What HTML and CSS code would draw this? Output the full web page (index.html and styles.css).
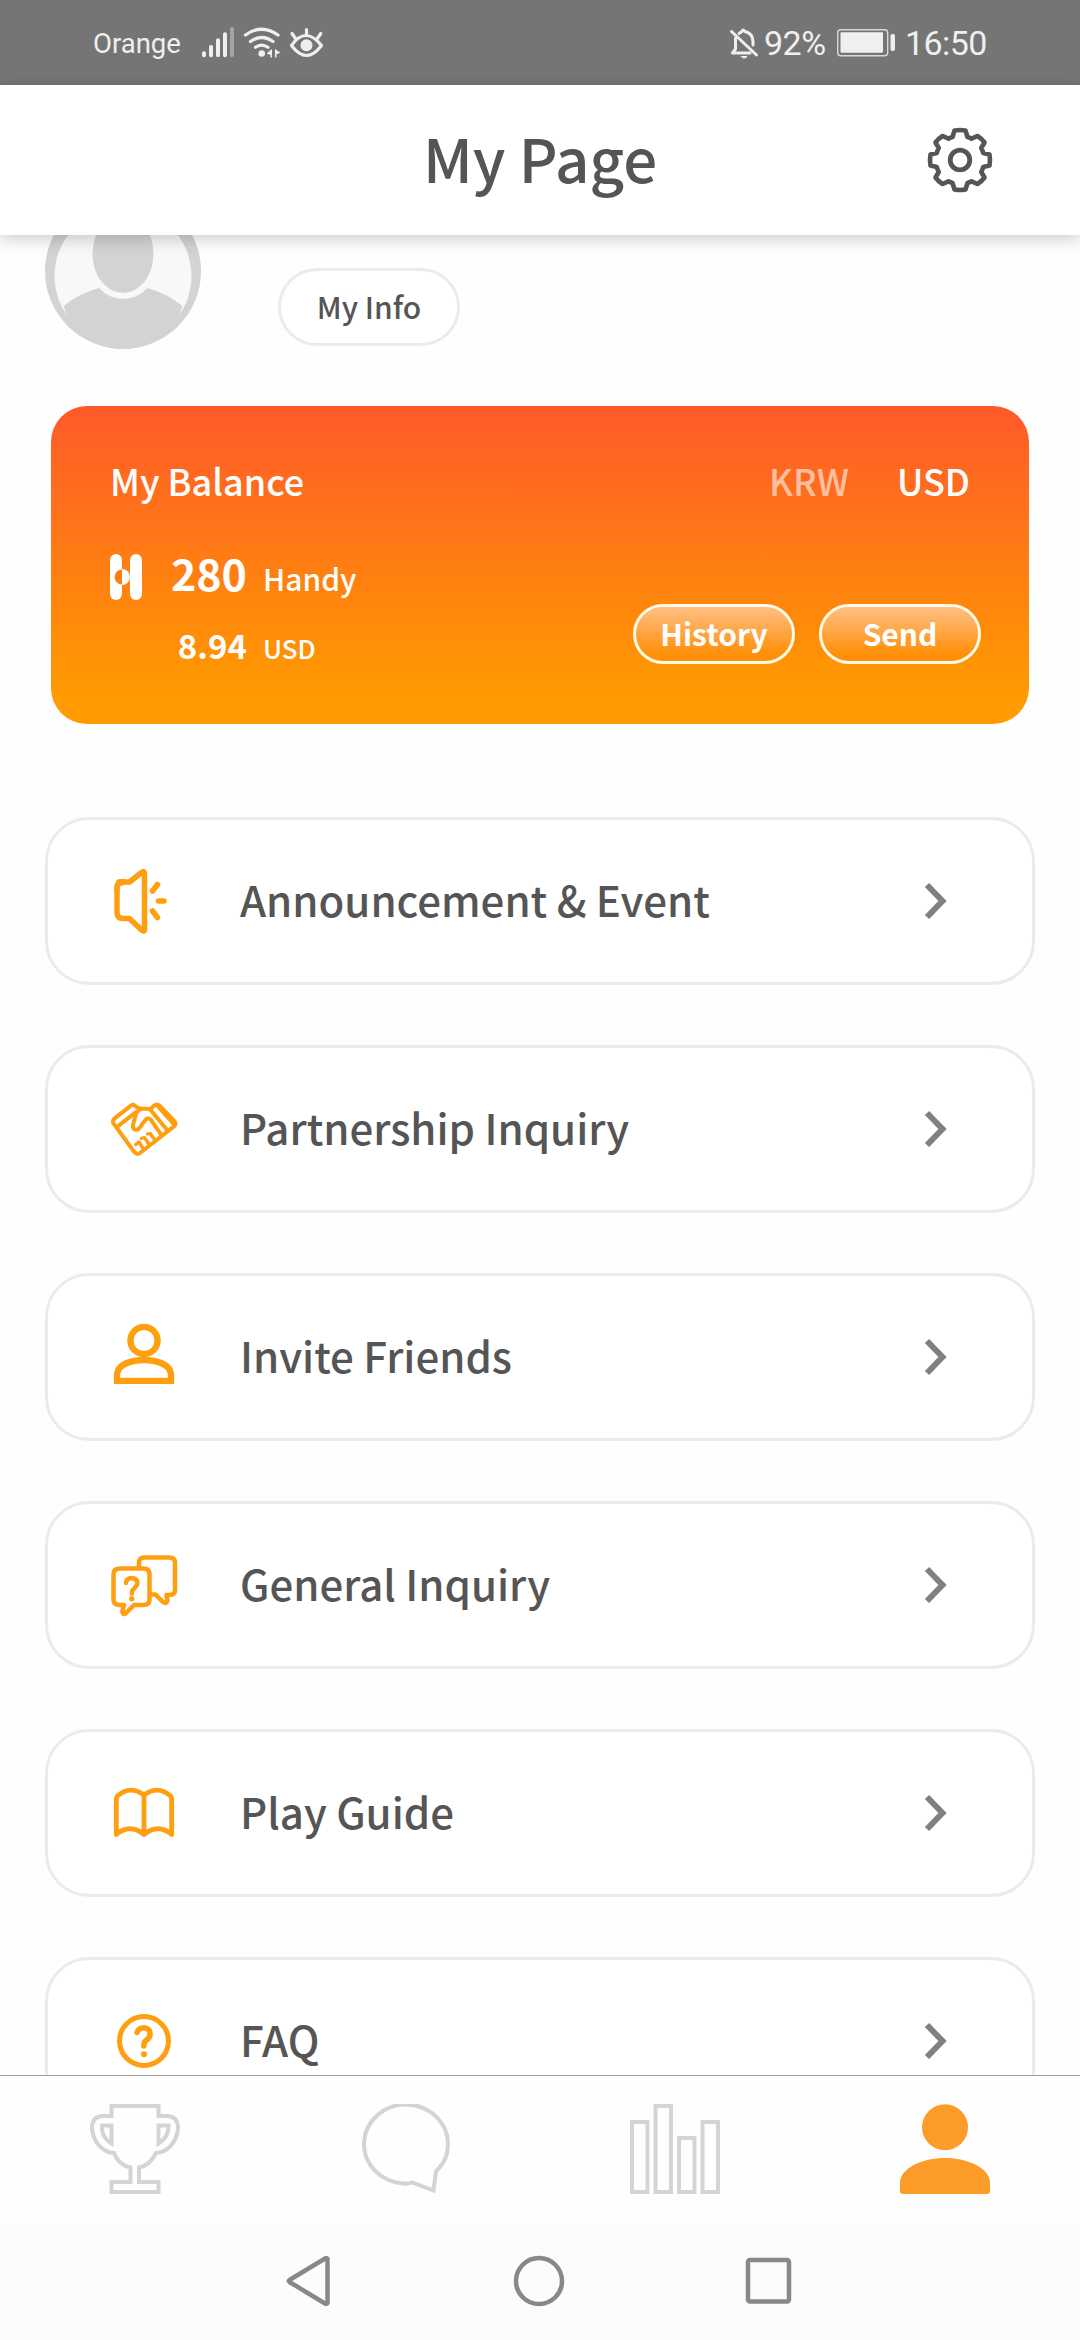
FILE: index.html
```html
<!DOCTYPE html>
<html lang="en">
<head>
<meta charset="utf-8">
<title>My Page</title>
<link rel="stylesheet" href="styles.css">
</head>
<body>
<div class="screen">
  <div class="status">
    <span class="carrier">Orange</span>
    <svg class="status-left" viewBox="200 24 126 38" width="126" height="38">
      <g stroke="#efefef" stroke-width="4" stroke-linecap="round">
        <path d="M204 53.2V55.3M211 47V55.3M218 40.3V55.3M225 34.3V55.3"/>
        <path stroke="#a3a3a3" d="M232 29V55.3"/>
      </g>
      <g fill="none" stroke="#efefef" stroke-width="3.2" stroke-linecap="round">
        <path d="M245.5 35q16-11.500 32.500 0"/>
        <path d="M250.500 41.500q11-8 22.500 0"/>
        <path d="M255.500 47.300q6-4.500 12.500 0"/>
      </g>
      <circle cx="261.700" cy="53.500" r="3.300" fill="#efefef"/>
      <path d="M272 49v8.500h-1.500V55l-4-1.500zM275 49l5.500 3.800-4 1.500v3.200H275z" fill="#efefef"/>
      <g fill="none" stroke="#efefef" stroke-width="3.200" stroke-linecap="round">
        <path d="M291.500 45.500q14-20 30 0-15 20-30 0z" stroke-linejoin="round"/>
        <path d="M306.500 29.500v5.500M292 33.500l3.500 5M320.800 33.500l-3.500 5"/>
      </g>
      <circle cx="306.500" cy="45.300" r="6" fill="#efefef"/>
    </svg>
    <svg class="bell" viewBox="728 25 32 35" width="32" height="35">
      <g fill="none" stroke="#efefef" stroke-width="3" stroke-linecap="round" stroke-linejoin="round">
        <path d="M731.500 30.500L756.500 54"/>
        <path d="M735.500 37V48L732.500 52H750"/>
        <path d="M739 32.500q2-1.500 3-2 .5-3 3 0 8 2 8 10V44"/>
      </g>
      <path d="M740.500 55h7q-3 5-7 0z" fill="#efefef"/>
    </svg>
    <span class="percent">92%</span>
    <svg class="battery" viewBox="836 28 60 30" width="60" height="30">
      <rect x="837.700" y="29.700" width="50" height="26" rx="3" fill="none" stroke="#d8d8d8" stroke-width="1.400"/>
      <rect x="840.500" y="32.300" width="42.500" height="20.500" rx="1" fill="#efefef"/>
      <rect x="890.500" y="34" width="4.500" height="17" rx="2" fill="#efefef"/>
    </svg>
    <span class="clock">16:50</span>
  </div>

  <header class="header">
    <h1 class="title">My Page</h1>
    <svg class="gear" viewBox="-33 -33 66 66" width="66" height="66">
      <path d="M-5.500 -29.500Q0 -30.500 5.500 -29.500L7.500 -23Q9.500 -22.500 11.500 -21.300L17.500 -24Q21.500 -21.500 24.500 -17.500L21.300 -12Q22.500 -9.500 23.300 -7L29.500 -5.500Q30.500 0 29.500 5.500L23.300 7Q22.500 9.500 21.300 12L24.500 17.500Q21.500 21.500 17.500 24L11.500 21.300Q9.500 22.500 7.500 23L5.500 29.500Q0 30.500 -5.500 29.500L-7.500 23Q-9.500 22.500 -11.500 21.300L-17.500 24Q-21.500 21.500 -24.500 17.500L-21.300 12Q-22.500 9.500 -23.300 7L-29.500 5.500Q-30.500 0 -29.500 -5.500L-23.300 -7Q-22.500 -9.500 -21.300 -12L-24.500 -17.500Q-21.500 -21.500 -17.500 -24L-11.500 -21.300Q-9.500 -22.500 -7.500 -23Z" fill="none" stroke="#555" stroke-width="4.600" stroke-linejoin="round"/>
      <circle r="9.800" fill="none" stroke="#555" stroke-width="4.800"/>
    </svg>
  </header>

  <main class="content">
    <section class="profile">
      <svg class="avatar" viewBox="45 235 156 114" width="156" height="114">
        <circle cx="123" cy="271" r="78" fill="#d3d3d3"/>
        <circle cx="123" cy="276" r="68.500" fill="#f8f8f6"/>
        <ellipse cx="123" cy="254" rx="30.500" ry="39" fill="#d3d3d3"/>
        <path d="M63.500 306Q78 294 99 288Q109 299 123 299Q137 299 147.500 288Q168 294 182.500 306L176 325Q150 349 123 349Q96 349 70 325Z" fill="#d3d3d3"/>
      </svg>
      <button class="my-info">My Info</button>
    </section>

    <section class="balance">
      <div class="balance-head">
        <span>My Balance</span>
        <span class="currencies"><span class="muted">KRW</span><span>USD</span></span>
      </div>
      <div class="balance-body">
        <div class="amounts">
          <svg class="coin" viewBox="110 554 32 46" width="32" height="46">
            <rect x="110" y="554" width="12" height="46" rx="6" fill="#fff"/>
            <rect x="130" y="554" width="12" height="46" rx="6" fill="#fff"/>
            <path d="M122 569.500a7.500 7.500 0 0 0 0 15z" fill="#ff7f12"/>
            <path d="M122 569a8 8 0 0 1 0 16z" fill="#fff"/>
          </svg>
          <span class="amount">280</span><span class="unit">Handy</span>
          <span class="amount small">8.94</span><span class="unit small">USD</span>
        </div>
        <div class="actions">
          <button class="action">History</button>
          <button class="action">Send</button>
        </div>
      </div>
    </section>

    <nav class="menu">
      <a class="item">
        <svg class="icon" viewBox="0 0 72 72">
          <path d="M12 16.500h10.500L34.500 7q3-2.500 3 1.500V64q0 3-3 .5L22.500 53H16q-6 0-6-6V23q0-6 6-6" transform="translate(-1 .5)"/>
          <path d="M9 23q0-6.500 6-6.500"/>
          <path d="M44.500 26l5-6.500M50.500 36h5.500M44.500 46l5 6.500" transform="translate(0 0)"/>
        </svg>
        <span class="label">Announcement &amp; Event</span>
        <svg class="chevron" viewBox="0 0 24 38"><path d="M3 3L18.500 19L3 35"/></svg>
      </a>
      <a class="item">
        <svg class="icon" viewBox="108 1093 72 72">
          <g transform="translate(100 1085) scale(.3333)" stroke-width="12">
            <path d="M105 62Q100 56 93 62L43 101Q36 108 41 116L103 201Q111 211 120 204L222 124Q230 117 224 109L181 64Q172 54 162 62L153 71H128Q114 72 105 62Z"/>
            <path d="M57 121L107 82M150 73L201 134M172 62L221 117"/>
            <path d="M121 73Q107 82 106 94L99 120Q97 135 110 134Q118 133 124 121L138 103Q147 96 154 106L183 148"/>
            <path d="M107 179L117 171L130 192M124 160L134 158L148 180M142 147L150 145L165 166" stroke-width="10"/>
          </g>
        </svg>
        <span class="label">Partnership Inquiry</span>
        <svg class="chevron" viewBox="0 0 24 38"><path d="M3 3L18.500 19L3 35"/></svg>
      </a>
      <a class="item">
        <svg class="icon" viewBox="0 0 72 72">
          <g stroke-width="6.300" stroke-linejoin="miter">
            <circle cx="36" cy="19.500" r="13.600"/>
            <path d="M9 59.800V53C10 43 24 39 36 39S62 43 63 53V59.800Z"/>
          </g>
        </svg>
        <span class="label">Invite Friends</span>
        <svg class="chevron" viewBox="0 0 24 38"><path d="M3 3L18.500 19L3 35"/></svg>
      </a>
      <a class="item">
        <svg class="icon" viewBox="0 0 72 72">
          <g stroke-width="4.500">
            <path d="M12 19.500H35.500Q41.500 19.500 41.500 25.500V50.500Q41.500 56 35.500 56H26L17.500 64.500Q15 66 14.300 62.500L16 56H12Q5.500 56 5.500 50.500V25.500Q5.500 19.500 12 19.500Z"/>
            <path d="M31 19V14Q31 8.500 36 8.500H61.500Q67 8.500 67 14V41Q67 46 61.500 46H58.500L59.500 51.500Q58.500 55.500 55 53L47.500 45.500H42"/>
            <path d="M18 34Q18.500 29 23.700 29Q29.500 29.500 29.500 34.500Q29 37 26 39.500Q23.800 41.500 23.800 44.500"/>
          </g>
          <circle class="dot" cx="23.700" cy="49.800" r="2.700"/>
        </svg>
        <span class="label">General Inquiry</span>
        <svg class="chevron" viewBox="0 0 24 38"><path d="M3 3L18.500 19L3 35"/></svg>
      </a>
      <a class="item">
        <svg class="icon" viewBox="0 0 72 72">
          <path stroke-width="4.800" d="M36 18Q22 8 10 18.500Q8.300 20 8.300 22V57.500Q22 46 36 57.500Q50 46 63.700 57.500V22Q63.700 20 62 18.500Q50 8 36 18ZV57"/>
        </svg>
        <span class="label">Play Guide</span>
        <svg class="chevron" viewBox="0 0 24 38"><path d="M3 3L18.500 19L3 35"/></svg>
      </a>
      <a class="item">
        <svg class="icon" viewBox="0 0 72 72">
          <circle cx="36" cy="36" r="24.500" stroke-width="5"/>
          <path stroke-width="5.500" d="M29 27.500Q31 22.800 36 22.800Q42.500 23.500 42 30Q41.500 33 38.500 35Q35.800 37 35.800 41"/>
          <circle class="dot" cx="36" cy="49.300" r="3"/>
        </svg>
        <span class="label">FAQ</span>
        <svg class="chevron" viewBox="0 0 24 38"><path d="M3 3L18.500 19L3 35"/></svg>
      </a>
    </nav>
  </main>

  <nav class="tabs">
    <svg class="tab" viewBox="0 0 90 90">
      <g fill="none" stroke="#d4d4d4" stroke-width="4">
        <path d="M21.500 2H68.500V12H78Q88 13 88 24C87 38 78 48 66 49C62 57 57 62 49 63.500V78H68.500V88H21.500V78H40.500V63.500C33 62 27 57 24 49C12 48 3 38 2 24Q2 13 12 12H21.500Z"/>
        <path d="M21.500 21.500H12Q11 33 21.500 39.500ZM68.500 21.500H78.500Q79 33 68.500 39.500Z"/>
      </g>
    </svg>
    <svg class="tab" viewBox="0 0 90 90">
      <path fill="none" stroke="#d4d4d4" stroke-width="4" d="M52 78.500Q48 80 43 79.500A42 39.500 0 1 1 88 41Q88 56 76 67.500L73.500 86.500Z"/>
    </svg>
    <svg class="tab" viewBox="0 0 90 90">
      <path fill="none" stroke="#d4d4d4" stroke-width="4" d="M2 18H17.500V88H2ZM25.500 2H41V88H25.500ZM49 34H64.500V88H49ZM72.500 18H88V88H72.500Z"/>
    </svg>
    <svg class="tab" viewBox="0 0 90 90">
      <g fill="#fd9b28">
        <circle cx="45" cy="23.300" r="23"/>
        <path d="M0 87V78C1 64 22 54 45 54S89 64 90 78V87Q90 90 87 90H3Q0 90 0 87Z"/>
      </g>
    </svg>
  </nav>

  <div class="system-nav">
    <svg viewBox="0 0 50 54" width="50" height="54"><path d="M43.500 5V49Q43 50.500 41 49.500L5.500 28Q4 27 5.500 26L41 4.500Q43 3.500 43.500 5Z"/></svg>
    <svg viewBox="0 0 54 54" width="54" height="54"><circle cx="27" cy="27" r="23"/></svg>
    <svg viewBox="0 0 50 54" width="50" height="54"><rect x="4" y="6" width="41" height="41.500" rx="2"/></svg>
  </div>
</div>
</body>
</html>
```
FILE: styles.css
```css
* { box-sizing: border-box; }

body {
  margin: 0;
  background: #fefefe;
  color: #555;
  font-family: "Noto Sans CJK KR", "Noto Sans", sans-serif;
  font-weight: 500;
}

svg { display: block; flex: none; }

button {
  padding: 0;
  font: inherit;
  color: inherit;
  background: none;
}

.screen {
  display: flex;
  flex-direction: column;
  width: 1080px;
  height: 2340px;
  overflow: hidden;
}

/* status bar */
.status {
  flex: none;
  display: flex;
  align-items: center;
  height: 85px;
  padding: 1px 0 0 93px;
  background: #757575;
  color: #efefef;
  font-family: Roboto, sans-serif;
  font-weight: 400;
  white-space: nowrap;
}
.carrier { width: 107px; font-size: 27.5px; }
.bell { margin-left: 402px; }
.percent { width: 72px; margin-left: 4px; font-size: 34px; letter-spacing: -.5px; }
.clock { margin-left: 9px; font-size: 34px; letter-spacing: -.6px; }

/* page header */
.header {
  position: relative;
  z-index: 1;
  flex: none;
  display: grid;
  grid-template-columns: 1fr auto 1fr;
  align-items: center;
  height: 150px;
  padding: 0 87px;
  background: #fff;
  box-shadow: 0 4px 16px rgba(0, 0, 0, .2);
}
.title {
  grid-column: 2;
  margin: 0;
  padding-bottom: 6px;
  font-size: 60px;
  font-weight: 500;
  line-height: 80px;
}
.gear { justify-self: end; }

/* scrolling content */
.content {
  flex: 1;
  min-height: 0;
  overflow: hidden;
  padding: 0 45px;
}
.profile { display: flex; height: 114px; }
.my-info {
  width: 182px;
  height: 78px;
  margin: 33px 0 0 77px;
  padding-bottom: 3px;
  border: 3px solid #ebebeb;
  border-radius: 39px;
  background: #fff;
  font-size: 30px;
  line-height: 44px;
}

.balance {
  height: 318px;
  margin: 57px 6px 93px;
  padding: 48px 48px 0 59px;
  border-radius: 36px;
  background: linear-gradient(#ff5a2a, #ff9a00 90%);
  color: #fff;
}
.balance-head {
  display: flex;
  justify-content: space-between;
  padding-right: 11px;
  font-size: 36px;
  line-height: 52px;
}
.currencies { display: flex; gap: 48px; }
.muted { opacity: .57; }
.balance-body {
  display: flex;
  justify-content: space-between;
  margin-top: 36px;
}
.amounts {
  display: grid;
  grid-template-columns: 32px 105px auto;
  grid-template-rows: 60px 46px;
  row-gap: 20px;
  align-items: baseline;
}
.coin { align-self: start; margin-top: 12px; }
.amount { grid-column: 2; text-align: right; font-size: 43px; font-weight: 700; line-height: 60px; }
.amount.small { font-size: 33px; line-height: 46px; }
.unit { padding-left: 16px; font-size: 30px; line-height: 44px; }
.unit.small { font-size: 26px; line-height: 40px; }
.actions { display: flex; gap: 24px; margin-top: 62px; }
.action {
  width: 162px;
  height: 60px;
  padding-bottom: 3px;
  border: 3px solid #fffbe8;
  border-radius: 30px;
  background: linear-gradient(#ffc084, #ff8f08 88%) padding-box;
  font-size: 30px;
  font-weight: 700;
  line-height: 44px;
}

.menu { display: flex; flex-direction: column; gap: 60px; }
.item {
  flex: none;
  display: flex;
  align-items: center;
  height: 168px;
  padding: 0 84px 0 60px;
  border: 3px solid #ebebeb;
  border-radius: 44px;
  background: #fff;
}
.icon {
  width: 72px;
  height: 72px;
  fill: none;
  stroke: #ff9e0f;
  stroke-width: 5.5;
  stroke-linecap: round;
  stroke-linejoin: round;
}
.dot { fill: #ff9e0f; stroke: none; }
.label {
  flex: 1;
  padding: 0 0 5px 60px;
  font-size: 42px;
  line-height: 60px;
}
.chevron {
  width: 24px;
  height: 38px;
  fill: none;
  stroke: #808080;
  stroke-width: 6;
}

/* app tabs */
.tabs {
  flex: none;
  display: flex;
  justify-content: space-between;
  height: 147px;
  padding: 28px 90px 0;
  border-top: 1px solid #a0a0a0;
  background: #fefefe;
}
.tab { width: 90px; height: 90px; }

/* device navigation */
.system-nav {
  flex: none;
  display: flex;
  justify-content: space-between;
  align-items: center;
  height: 118px;
  padding: 0 286px 0 284px;
  background: #fcfcfc;
}
.system-nav svg { fill: none; stroke: #888; stroke-width: 4.5; }
```
